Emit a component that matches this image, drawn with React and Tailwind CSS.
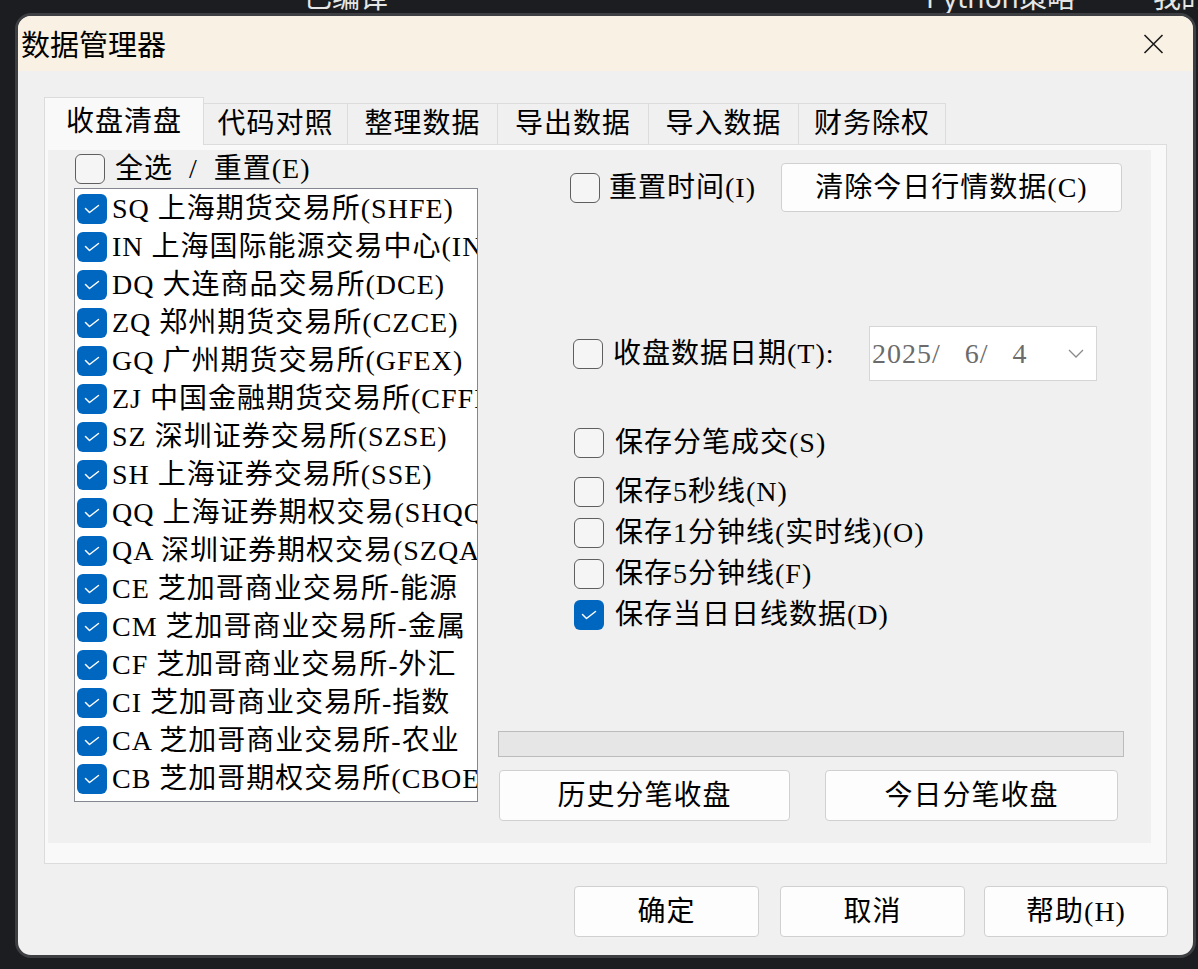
const exchanges = [
  "SQ 上海期货交易所(SHFE)",
  "IN 上海国际能源交易中心(INE)",
  "DQ 大连商品交易所(DCE)",
  "ZQ 郑州期货交易所(CZCE)",
  "GQ 广州期货交易所(GFEX)",
  "ZJ 中国金融期货交易所(CFFEX)",
  "SZ 深圳证券交易所(SZSE)",
  "SH 上海证券交易所(SSE)",
  "QQ 上海证券期权交易(SHQQ)",
  "QA 深圳证券期权交易(SZQA)",
  "CE 芝加哥商业交易所-能源",
  "CM 芝加哥商业交易所-金属",
  "CF 芝加哥商业交易所-外汇",
  "CI 芝加哥商业交易所-指数",
  "CA 芝加哥商业交易所-农业",
  "CB 芝加哥期权交易所(CBOE)",
];

const tabs = [
  { label: "代码对照", w: "w-[144px]" },
  { label: "整理数据", w: "w-[150px]" },
  { label: "导出数据", w: "w-[151px]" },
  { label: "导入数据", w: "w-[150px]" },
  { label: "财务除权", w: "w-[147px]" },
];

const saveOptions = [
  { label: "保存分笔成交(S)", on: false, mt: "mt-[46px]" },
  { label: "保存5秒线(N)", on: false, mt: "mt-[18px]" },
  { label: "保存1分钟线(实时线)(O)", on: false, mt: "mt-[10px]" },
  { label: "保存5分钟线(F)", on: false, mt: "mt-[10px]" },
  { label: "保存当日日线数据(D)", on: true, mt: "mt-[10px]" },
];

const CheckBox = ({ on }) =>
  on ? (
    <span className="w-[30px] h-[30px] shrink-0 rounded-[6px] bg-[#0067c0] flex items-center justify-center">
      <svg width="16" height="10" viewBox="0 0 16 10" fill="none">
        <path
          d="M1.5 4.5 L5.5 8.5 L14.5 1.5"
          stroke="white"
          strokeWidth="1.5"
          strokeLinecap="round"
          strokeLinejoin="round"
        />
      </svg>
    </span>
  ) : (
    <span className="block w-[30px] h-[30px] shrink-0 rounded-[6px] border-[1.5px] border-[#5f5f5f] bg-[#f5f5f5]" />
  );

const Button = ({ children, className }) => (
  <button
    className={
      "h-full flex items-center justify-center bg-[#fdfdfd] border border-[#d0d0d0] rounded-[4px] leading-none " +
      className
    }
  >
    {children}
  </button>
);

export default function App() {
  return (
    <div className="w-[1198px] h-[969px] bg-[#1b1d20] overflow-hidden font-['Liberation_Serif','Noto_Sans_CJK_SC',serif] text-black">
      {/* app behind the dialog, clipped */}
      <div className="h-[13px] overflow-hidden flex font-['Noto_Sans','Noto_Sans_CJK_SC',sans-serif] text-[28px] leading-[28px] text-[#e6e6e6]">
        <span className="ml-[304px] -mt-[17px] whitespace-nowrap">已编译</span>
        <span className="ml-[538px] -mt-[17px] whitespace-nowrap">Python策略</span>
        <span className="ml-[78px] -mt-[17px] whitespace-nowrap">我的</span>
      </div>

      <div className="ml-[15px] w-[1181px] h-[945px] rounded-[16px] border-[3px] border-[#3d3f43] bg-[#f0f0f0] overflow-hidden flex flex-col text-[28px] tracking-[1px]">
        <div className="h-[55px] shrink-0 bg-[#f9f1e3] flex items-center justify-between pl-[3px] pr-[29px]">
          <span className="font-['Noto_Sans_CJK_SC',sans-serif] text-[29px] leading-none tracking-normal">
            数据管理器
          </span>
          <svg width="21" height="20" viewBox="0 0 21 20" fill="none">
            <path d="M1.5 1 L19.5 19 M19.5 1 L1.5 19" stroke="#1a1a1a" strokeWidth="1.6" />
          </svg>
        </div>

        <div className="pl-[26px] pt-[26px]">
          <div className="flex items-end h-[47px]">
            <div className="w-[160px] h-[48px] -mb-px relative z-10 bg-[#f9f9f9] border border-b-0 border-[#dcdcdc] flex items-center justify-center leading-none">
              收盘清盘
            </div>
            {tabs.map((t) => (
              <div
                key={t.label}
                className={
                  t.w +
                  " h-[41px] border-t border-r border-[#dcdcdc] bg-[#f0f0f0] flex items-center justify-center leading-none"
                }
              >
                {t.label}
              </div>
            ))}
          </div>

          <div className="w-[1123px] h-[720px] border border-[#dcdcdc] bg-[#f9f9f9] pl-[3px] pt-[5px]">
            <div className="w-[1103px] h-[693px] bg-[#f0f0f0] flex">
              {/* left: exchange list */}
              <div className="w-[430px] pl-[26px] pt-[4px] shrink-0">
                <div className="h-[30px] flex items-center ml-[1px]">
                  <CheckBox on={false} />
                  <span className="ml-[10px] leading-none whitespace-pre">全选  /  重置(E)</span>
                </div>
                <div className="mt-[4px] w-[404px] h-[614px] border border-[#828790] bg-white overflow-hidden pt-px">
                  {exchanges.map((ex) => (
                    <div key={ex} className="h-[38px] flex items-center pl-[2px]">
                      <CheckBox on />
                      <span className="ml-[5px] leading-none whitespace-pre">{ex}</span>
                    </div>
                  ))}
                </div>
              </div>

              {/* right: options */}
              <div className="ml-[20px] w-[626px] flex flex-col">
                <div className="mt-[13px] h-[49px] flex items-center pr-[2px]">
                  <span className="ml-[72px] flex">
                    <CheckBox on={false} />
                  </span>
                  <span className="ml-[9px] leading-none whitespace-nowrap">重置时间(I)</span>
                  <Button className="ml-auto w-[341px]">清除今日行情数据(C)</Button>
                </div>

                <div className="mt-[114px] h-[55px] flex items-center">
                  <span className="ml-[75px] flex">
                    <CheckBox on={false} />
                  </span>
                  <span className="ml-[10px] leading-none whitespace-nowrap">收盘数据日期(T):</span>
                  <div className="ml-auto mr-[27px] w-[228px] h-full bg-white border border-[#d6d6d6] flex items-center pl-[2px] pr-[12px]">
                    <span className="text-[#6b6b6b] leading-none whitespace-pre">2025/   6/   4</span>
                    <svg className="ml-auto" width="16" height="9" viewBox="0 0 16 9" fill="none">
                      <path d="M1 1 L8 8 L15 1" stroke="#8a8a8a" strokeWidth="1.3" />
                    </svg>
                  </div>
                </div>

                {saveOptions.map((o) => (
                  <div key={o.label} className={o.mt + " h-[31px] flex items-center"}>
                    <span className="ml-[76px] flex">
                      <CheckBox on={o.on} />
                    </span>
                    <span className="ml-[11px] leading-none whitespace-nowrap">{o.label}</span>
                  </div>
                ))}

                <div className="mt-[101px] h-[26px] w-[626px] bg-[#e6e6e6] border border-[#bcbcbc]" />

                <div className="mt-[13px] h-[51px] flex">
                  <Button className="ml-[1px] w-[291px]">历史分笔收盘</Button>
                  <Button className="ml-[35px] w-[293px]">今日分笔收盘</Button>
                </div>
              </div>
            </div>
          </div>
        </div>

        <div className="mt-[22px] h-[51px] flex justify-end pr-[25px]">
          <Button className="w-[185px] border-[#0067c0]">确定</Button>
          <Button className="ml-[21px] w-[185px]">取消</Button>
          <Button className="ml-[19px] w-[184px]">帮助(H)</Button>
        </div>
      </div>
    </div>
  );
}
